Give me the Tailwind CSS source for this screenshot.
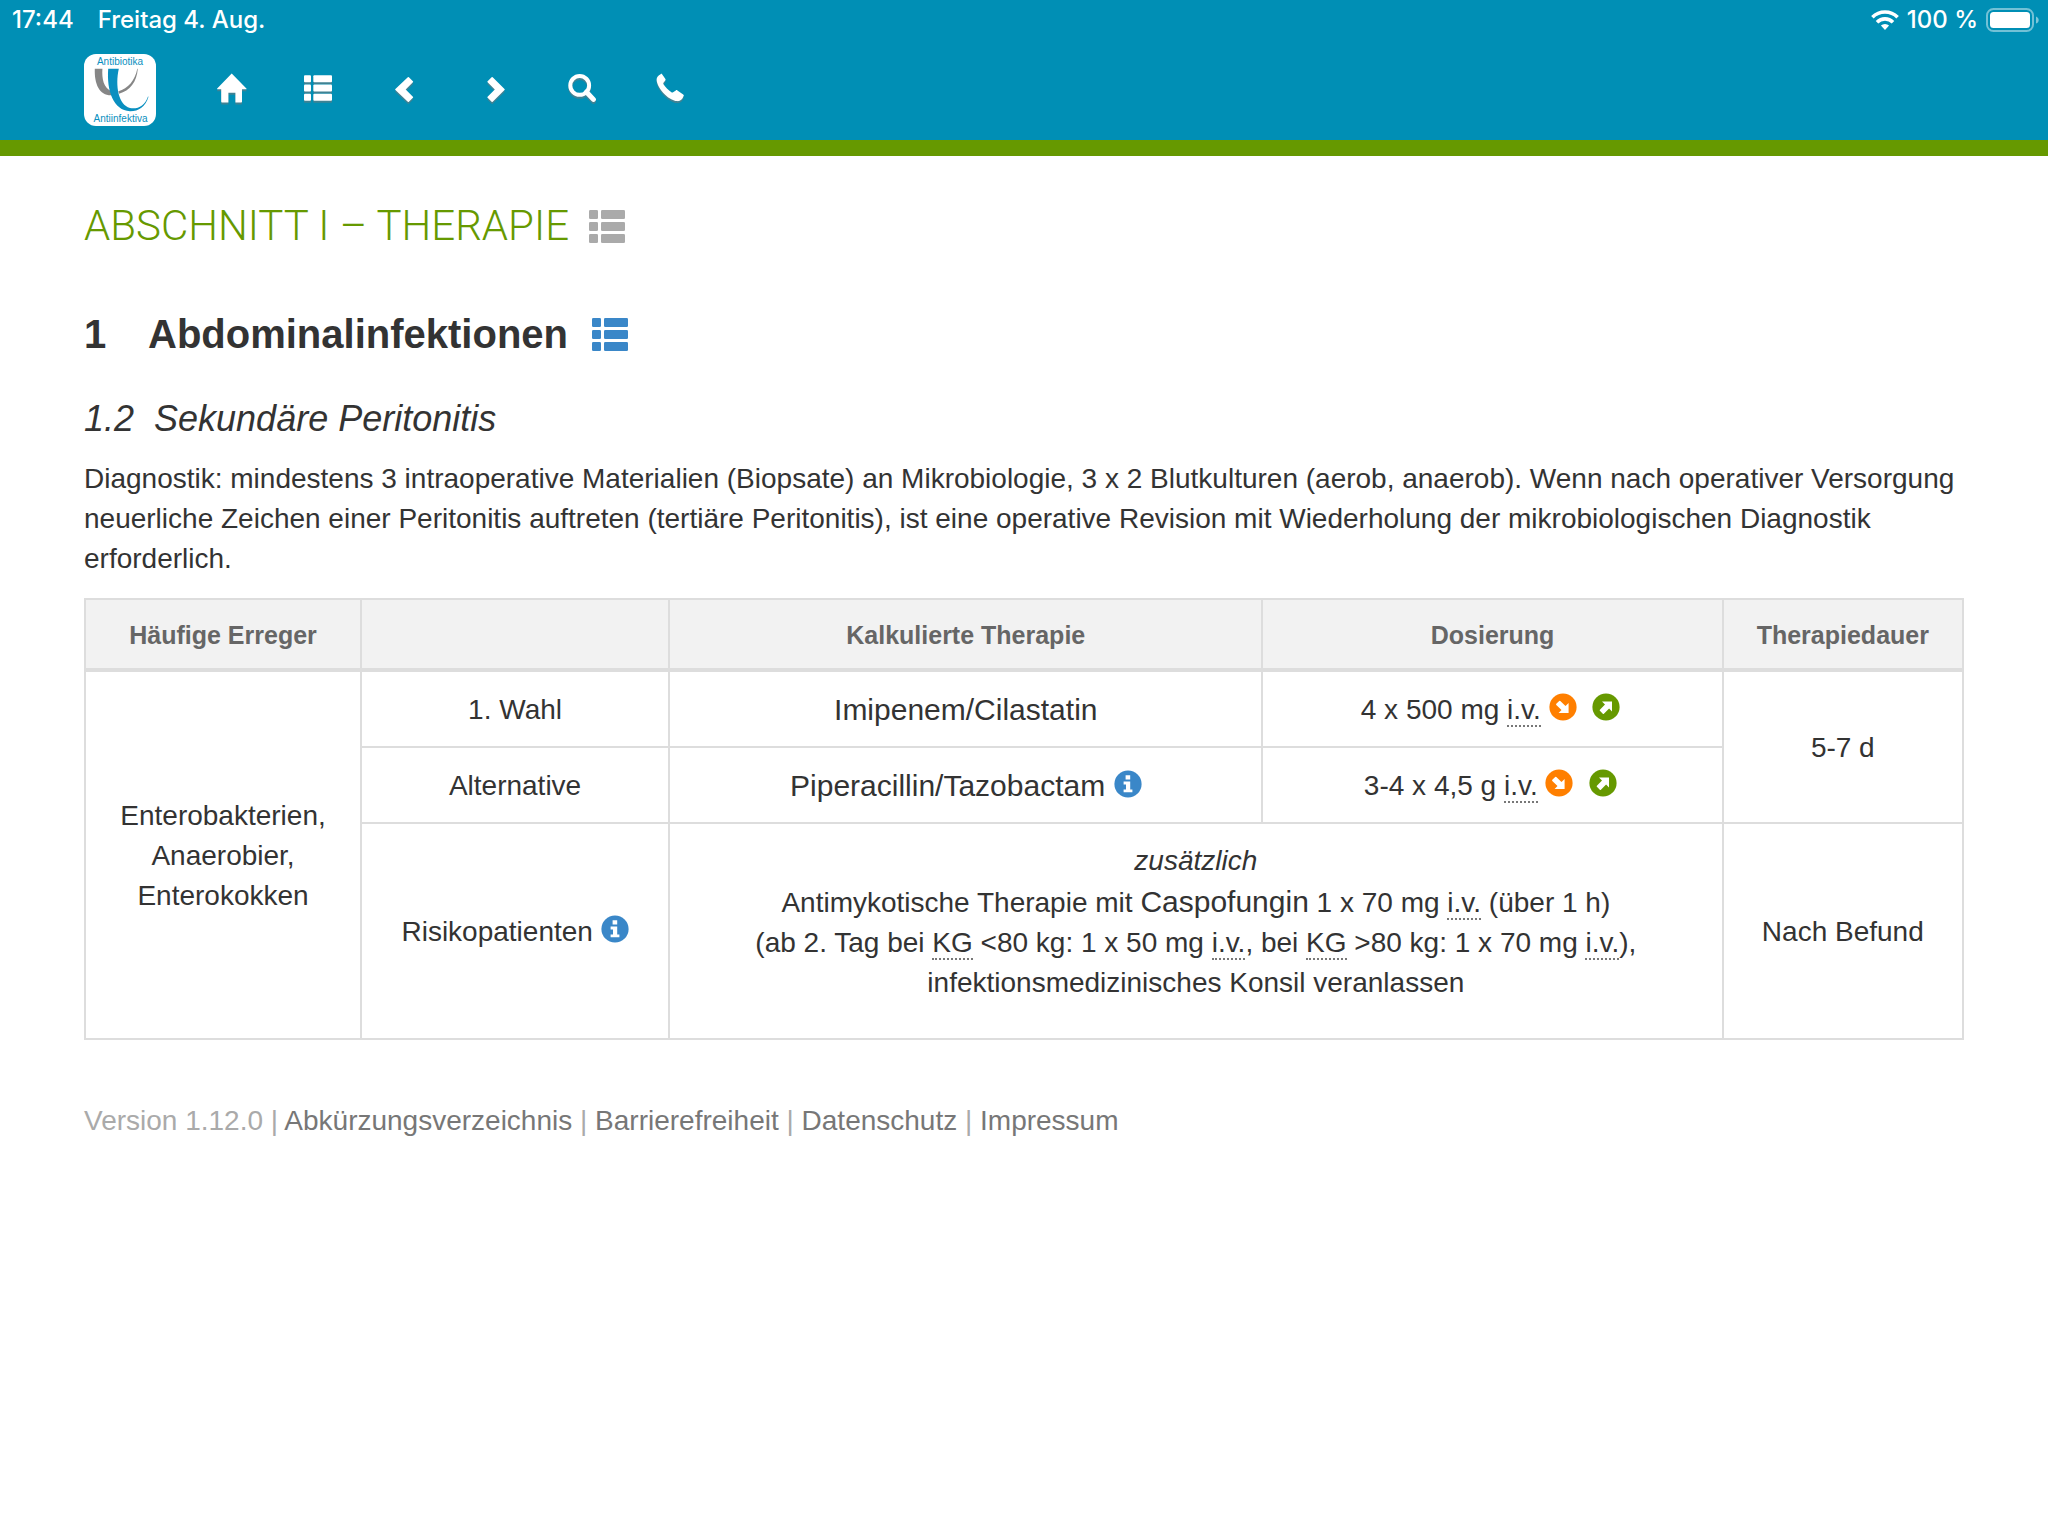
<!DOCTYPE html>
<html lang="de">
<head>
<meta charset="utf-8">
<meta name="viewport" content="width=device-width, initial-scale=1">
<title>Antibiotika Antiinfektiva</title>
<script src="https://cdn.jsdelivr.net/npm/@tailwindcss/browser@4"></script>
</head>
<body class="bg-white font-['Liberation_Sans',Arial,sans-serif] text-[28px] leading-[40px] text-[#333]">

<!-- Shared icons -->
<svg class="hidden" aria-hidden="true">
  <symbol id="list" viewBox="0 0 36 33">
    <rect x="0" y="0" width="9" height="9" rx="1.3"/><rect x="12" y="0" width="24" height="9" rx="1.3"/>
    <rect x="0" y="12" width="9" height="9" rx="1.3"/><rect x="12" y="12" width="24" height="9" rx="1.3"/>
    <rect x="0" y="24" width="9" height="9" rx="1.3"/><rect x="12" y="24" width="24" height="9" rx="1.3"/>
  </symbol>
  <symbol id="info" viewBox="0 0 28 28">
    <circle cx="14" cy="14" r="13.6"/>
    <path fill="#fff" d="M11.6 5.2h4.6v4.2h-4.6zM9.6 11.6h6.6v8h2.2v2.6H9.6v-2.6h2.4v-5.2H9.6z"/>
  </symbol>
  <symbol id="arrow" viewBox="0 0 28 28">
    <circle cx="14" cy="14" r="13.6"/>
    <path fill="#fff" d="M10 8.4h10v10l-2.9-2.9-5.2 5.2a.8.8 0 0 1-1.1 0l-2.9-2.9a.8.8 0 0 1 0-1.1l5.1-5.2z"/>
  </symbol>
</svg>

<header class="border-b-[16px] border-[#690] bg-[#008fb5] text-white">
  <div class="flex h-10 items-center justify-between pr-2 pl-3 font-['Inter',sans-serif] text-[24px] font-medium">
    <div class="flex gap-6"><span>17:44</span><span>Freitag 4. Aug.</span></div>
    <div class="flex items-center gap-2">
      <svg class="h-5 w-7" viewBox="0 0 28 20" aria-label="WLAN">
        <g fill="none" stroke="#fff" stroke-width="3.6"><path d="M1.4 7.2a18 18 0 0 1 25.2 0"/><path d="M6 12.2a11.4 11.4 0 0 1 16 0"/></g>
        <path fill="#fff" d="M9.9 15.6a5.8 5.8 0 0 1 8.2 0L14 20z"/>
      </svg>
      <span>100 %</span>
      <svg class="h-6 w-[54px]" viewBox="0 0 54 24" aria-label="Akku">
        <rect x="1" y="1" width="46" height="22" rx="6.5" fill="none" stroke="#fff" stroke-opacity=".45" stroke-width="2"/>
        <rect x="4" y="4" width="40" height="16" rx="3.5" fill="#fff"/>
        <path d="M50 8.4c3.6 1.4 3.6 5.8 0 7.2z" fill="#fff" fill-opacity=".5"/>
      </svg>
    </div>
  </div>

  <nav class="flex h-[100px] items-center gap-[60px] px-[84px]" aria-label="Hauptnavigation">
    <a href="#" aria-label="Startseite der App">
      <svg class="size-[72px]" viewBox="0 0 72 72">
        <rect width="72" height="72" rx="12" fill="#fff"/>
        <path fill="#868686" d="M10.8 14.8h7.6c-.6 10 1 19.6 9.8 22.6l.8 3.8C16 42.6 10.200 31 10.8 14.8zM34.4 37.3C44 34.6 51 26.5 53.3 14.8h.5C52.8 28 46 36.8 35 39.7z"/>
        <path fill="#0a8fc0" d="M24.2 14.8h10.6C31 32 34.5 51 46 54c7.5 1.6 15-2.5 18-11.6l.5.3C61.5 53 54.5 57.3 46 57.2 29.5 56.5 22.5 37 24.2 14.8z"/>
        <text x="36" y="11" text-anchor="middle" font-size="10" fill="#0a8fc0">Antibiotika</text>
        <text x="36.5" y="68" text-anchor="middle" font-size="10" fill="#0a8fc0">Antiinfektiva</text>
      </svg>
    </a>
    <div class="mb-1 flex items-center gap-[60px]">
      <a href="#" aria-label="Start" class="drop-shadow-[0_2px_0_#77777788]">
        <svg class="size-7 overflow-visible" viewBox="-1 0 28 28" fill="#fff"><path d="M14.7-.5 29.4 14.5c.3.4.2.7-.3.7H25v12.6c0 .5-.3.8-.8.8h-5.8v-9.8h-7v9.8H5c-.5 0-.8-.3-.8-.8V15.2H.5c-.5 0-.6-.3-.3-.7z"/></svg>
      </a>
      <a href="#" aria-label="Inhaltsverzeichnis" class="drop-shadow-[0_2px_0_#77777788]">
        <svg class="size-7" fill="#fff"><use href="#list"/></svg>
      </a>
      <a href="#" aria-label="Zurück" class="drop-shadow-[0_2px_0_#77777788]">
        <svg class="size-7" viewBox="0 -2 28 28" fill="#fff"><path d="m16.9 1.2 4 4a.8.8 0 0 1 0 1.1l-7.2 7.200 7.2 7.200a.8.8 0 0 1 0 1.1l-4 4a.8.8 0 0 1-1.1 0L3.400 14.1a.8.8 0 0 1 0-1.1L15.8 1.2a.8.8 0 0 1 1.1 0z"/></svg>
      </a>
      <a href="#" aria-label="Weiter" class="drop-shadow-[0_2px_0_#77777788]">
        <svg class="size-7" viewBox="0 -2 28 28" fill="#fff"><path d="m11.6 1.2-4 4a.8.8 0 0 0 0 1.1l7.2 7.2-7.2 7.2a.8.8 0 0 0 0 1.1l4 4a.8.8 0 0 0 1.1 0l11.8-11.8a.8.8 0 0 0 0-1.1L12.7 1.2a.8.8 0 0 0-1.1 0z"/></svg>
      </a>
      <a href="#" aria-label="Suche" class="drop-shadow-[0_2px_0_#77777788]">
        <svg class="size-7 overflow-visible" viewBox="0 0 28 28"><circle cx="11.7" cy="11.4" r="9.4" fill="none" stroke="#fff" stroke-width="4"/><path d="m18.4 18 7 7.400" stroke="#fff" stroke-width="5" stroke-linecap="round"/></svg>
      </a>
      <a href="#" aria-label="Telefon" class="drop-shadow-[0_2px_0_#77777788]">
        <svg class="size-7 overflow-visible" viewBox="0 -1 28 28" fill="#fff"><path d="M4.600-.8c.6-.5 1.100-.5 1.500.1l3.300 4.600c.3.500.3 1-.1 1.500L7.500 7.800c-.4.600-.3 1 0 1.500 1.500 2.500 5 6 7.900 7.900.6.400 1.200.4 1.700 0l2.700-1.800c.5-.4 1.100-.4 1.600 0l5.800 4c.7.500.8 1 .4 1.600-1.200 3.500-3.400 5.400-6.500 5.100-4.400-.4-9.900-3.900-13.800-8.200C3.300 13.600.6 8.500.6 4.600.6 2 2.300.7 4.600-.8z"/></svg>
      </a>
    </div>
  </nav>
</header>

<main class="px-[84px] pt-[45px]">
  <h1 class="flex items-center gap-5 font-['Roboto','Liberation_Sans',sans-serif] text-[42px] leading-[50px] font-light text-[#690]">
    ABSCHNITT I – THERAPIE
    <a href="#" aria-label="Zum Abschnitt"><svg class="h-[33px] w-9" fill="#aaa"><use href="#list"/></svg></a>
  </h1>
  <h2 class="mt-[58px] flex items-center text-[40px] leading-[50px] font-bold">
    <span class="w-16">1</span>Abdominalinfektionen
    <a href="#" class="ml-6" aria-label="Zum Kapitel"><svg class="h-[33px] w-9" fill="#3a87c8"><use href="#list"/></svg></a>
  </h2>
  <h3 class="mt-[38px] flex gap-5 text-[36px] leading-[44px] italic"><span>1.2</span><span>Sekundäre Peritonitis</span></h3>
  <p class="mt-[18px]">Diagnostik: mindestens 3 intraoperative Materialien (Biopsate) an Mikrobiologie, 3 x 2 Blutkulturen (aerob, anaerob). Wenn nach operativer Versorgung neuerliche Zeichen einer Peritonitis auftreten (tertiäre Peritonitis), ist eine operative Revision mit Wiederholung der mikrobiologischen Diagnostik erforderlich.</p>

  <table class="mt-[19px] w-full table-fixed border-collapse border-2 border-[#ddd] text-center leading-[40px]">
    <colgroup>
      <col class="w-[14.7%]"><col class="w-[16.4%]"><col class="w-[31.6%]"><col class="w-[24.5%]"><col class="w-[12.8%]">
    </colgroup>
    <thead class="border-b-4 border-[#ddd] bg-[#f2f2f2] text-[25px] text-[#666]">
      <tr>
        <th scope="col" class="border-x-2 border-[#ddd] pt-[15px] pb-[13px]">Häufige Erreger</th>
        <td class="border-x-2 border-[#ddd]"></td>
        <th scope="col" class="border-x-2 border-[#ddd] pt-[15px] pb-[13px]">Kalkulierte Therapie</th>
        <th scope="col" class="border-x-2 border-[#ddd] pt-[15px] pb-[13px]">Dosierung</th>
        <th scope="col" class="border-x-2 border-[#ddd] pt-[15px] pb-[13px]">Therapiedauer</th>
      </tr>
    </thead>
    <tbody>
      <tr>
        <td rowspan="3" class="border-2 border-[#ddd] px-4 pt-0.5">Enterobakterien,<br>Anaerobier,<br>Enterokokken</td>
        <td class="border-2 border-[#ddd] pt-0.5">1. Wahl</td>
        <td class="border-2 border-[#ddd] pt-[17px] pb-[15px] text-[30px] leading-[42px]">Imipenem/Cilastatin</td>
        <td class="border-2 border-[#ddd] pt-0.5">4 x 500 mg <abbr class="border-b-2 border-dotted border-[#777]">i.v.</abbr>
          <a href="#" aria-label="Dosis reduzieren"><svg class="inline-block size-7 rotate-90 align-[-2px]" fill="#ff7f00"><use href="#arrow"/></svg></a>
          <a href="#" class="mr-1 ml-2" aria-label="Dosis erhöhen"><svg class="inline-block size-7 align-[-2px]" fill="#690"><use href="#arrow"/></svg></a></td>
        <td rowspan="2" class="border-2 border-[#ddd] pt-0.5">5-7 d</td>
      </tr>
      <tr>
        <td class="border-2 border-[#ddd] pt-0.5">Alternative</td>
        <td class="border-2 border-[#ddd] pt-[17px] pb-[15px] text-[30px] leading-[42px]">Piperacillin/Tazobactam
          <a href="#" aria-label="Hinweis"><svg class="inline-block size-7 align-[-2px]" fill="#3a87c8"><use href="#info"/></svg></a></td>
        <td class="border-2 border-[#ddd] pt-0.5">3-4 x 4,5 g <abbr class="border-b-2 border-dotted border-[#777]">i.v.</abbr>
          <a href="#" aria-label="Dosis reduzieren"><svg class="inline-block size-7 rotate-90 align-[-2px]" fill="#ff7f00"><use href="#arrow"/></svg></a>
          <a href="#" class="mr-1 ml-2" aria-label="Dosis erhöhen"><svg class="inline-block size-7 align-[-2px]" fill="#690"><use href="#arrow"/></svg></a></td>
      </tr>
      <tr>
        <td class="border-2 border-[#ddd] pt-0.5">Risikopatienten
          <a href="#" aria-label="Hinweis"><svg class="inline-block size-7 align-[-2px]" fill="#3a87c8"><use href="#info"/></svg></a></td>
        <td colspan="2" class="border-2 border-[#ddd] pt-[17px] pb-[35px]">
          <p class="italic">zusätzlich</p>
          <p>Antimykotische Therapie mit <span class="text-[30px] leading-[42px]">Caspofungin</span> 1 x 70 mg <abbr class="border-b-2 border-dotted border-[#777]">i.v.</abbr> (über 1 h)<br>
          (ab 2. Tag bei <abbr class="border-b-2 border-dotted border-[#777]">KG</abbr> &lt;80 kg: 1 x 50 mg <abbr class="border-b-2 border-dotted border-[#777]">i.v.</abbr>, bei <abbr class="border-b-2 border-dotted border-[#777]">KG</abbr> &gt;80 kg: 1 x 70 mg <abbr class="border-b-2 border-dotted border-[#777]">i.v.</abbr>),<br>
          infektionsmedizinisches Konsil veranlassen</p>
        </td>
        <td class="border-2 border-[#ddd] pt-0.5">Nach Befund</td>
      </tr>
    </tbody>
  </table>
</main>

<footer class="px-[84px] pt-[61px] text-[#aaa]">
  Version 1.12.0 | <a href="#" class="text-[#777]">Abkürzungsverzeichnis</a> | <a href="#" class="text-[#777]">Barrierefreiheit</a> | <a href="#" class="text-[#777]">Datenschutz</a> | <a href="#" class="text-[#777]">Impressum</a>
</footer>
</body>
</html>
